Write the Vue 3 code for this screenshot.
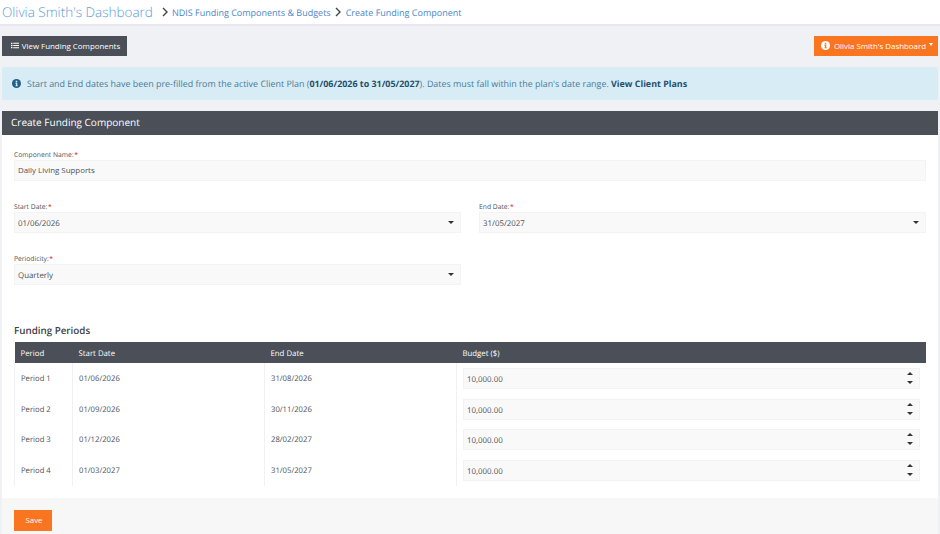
<template>
    <div class="page">
        <header class="topbar">
            <a class="crumb-title">Olivia Smith's Dashboard</a>
            <svg class="chevron first" viewBox="0 0 8 10"><path d="M2 1l4 4-4 4" /></svg>
            <a class="crumb">NDIS Funding Components &amp; Budgets</a>
            <svg class="chevron" viewBox="0 0 8 10"><path d="M2 1l4 4-4 4" /></svg>
            <a class="crumb">Create Funding Component</a>
        </header>

        <main class="content">
            <div class="actions">
                <button type="button" class="btn btn-dark">
                    <svg class="list-icon" viewBox="0 0 10 8">
                        <path d="M0 .5h1.8v1.6H0zM0 3.2h1.8v1.6H0zM0 5.9h1.8v1.6H0zM2.8.7H10v1.2H2.8zM2.8 3.4H10v1.2H2.8zM2.8 6.1H10v1.2H2.8z" />
                    </svg>
                    View Funding Components
                </button>
                <button type="button" class="btn btn-orange">
                    <svg class="info-icon" viewBox="0 0 16 16">
                        <circle cx="8" cy="8" r="8" fill="#fff" />
                        <path d="M6.6 3.2h2.8v2.4H6.6zM6 6.8h3.4v4.6h1V13H6v-1.6h1V8.4H6z" fill="#f97520" />
                    </svg>
                    Olivia Smith's Dashboard
                    <span class="caret"></span>
                </button>
            </div>

            <div class="alert">
                <svg class="alert-icon" viewBox="0 0 16 16">
                    <circle cx="8" cy="8" r="8" fill="#1f5f8b" />
                    <path d="M6.6 3.2h2.8v2.4H6.6zM6 6.8h3.4v4.6h1V13H6v-1.6h1V8.4H6z" fill="#d8ecf5" />
                </svg>
                <span>Start and End dates have been pre-filled from the active Client Plan (<b>01/06/2026 to 31/05/2027</b>). Dates must fall within the plan's date range. <b class="plans">View Client Plans</b></span>
            </div>

            <section class="card">
                <h2 class="card-title">Create Funding Component</h2>
                <div class="card-body">
                    <div class="field name-field">
                        <label>Component Name:<i>*</i></label>
                        <input class="control name-input" value="Daily Living Supports" />
                    </div>
                    <div class="form-grid">
                        <div class="field">
                            <label>Start Date:<i>*</i></label>
                            <div class="control select">01/06/2026<span class="arrow"></span></div>
                        </div>
                        <div class="field">
                            <label>End Date:<i>*</i></label>
                            <div class="control select">31/05/2027<span class="arrow"></span></div>
                        </div>
                        <div class="field">
                            <label>Periodicity:<i>*</i></label>
                            <div class="control select">Quarterly<span class="arrow"></span></div>
                        </div>
                    </div>

                    <h3 class="periods-title">Funding Periods</h3>
                    <table class="periods">
                        <thead>
                            <tr>
                                <th class="col-period">Period</th>
                                <th class="col-date">Start Date</th>
                                <th class="col-date">End Date</th>
                                <th>Budget ($)</th>
                            </tr>
                        </thead>
                        <tbody>
                            <tr v-for="row in periods" :key="row.name">
                                <td>{{ row.name }}</td>
                                <td>{{ row.start }}</td>
                                <td>{{ row.end }}</td>
                                <td class="budget-cell">
                                    <div class="control number">
                                        {{ row.budget }}
                                        <span class="spinner">
                                            <span class="up"></span>
                                            <span class="down"></span>
                                        </span>
                                    </div>
                                </td>
                            </tr>
                        </tbody>
                    </table>
                </div>
                <div class="card-footer">
                    <button type="button" class="btn btn-orange save">Save</button>
                </div>
            </section>
        </main>
    </div>
</template>

<script setup>
const periods = [
    { name: 'Period 1', start: '01/06/2026', end: '31/08/2026', budget: '10,000.00' },
    { name: 'Period 2', start: '01/09/2026', end: '30/11/2026', budget: '10,000.00' },
    { name: 'Period 3', start: '01/12/2026', end: '28/02/2027', budget: '10,000.00' },
    { name: 'Period 4', start: '01/03/2027', end: '31/05/2027', budget: '10,000.00' },
];
</script>

<style>
html, body {
    margin: 0;
    background: #f0f1f5;
    overflow: hidden;
}
</style>

<style scoped>
.page {
    width: 940px;
    height: 534px;
    overflow: hidden;
    font-family: "Open Sans", "Liberation Sans", sans-serif;
    font-size: 8px;
    color: #4f5158;
    text-rendering: geometricPrecision;
}

.topbar {
    box-sizing: border-box;
    height: 26px;
    display: flex;
    align-items: center;
    padding: 0 2px 0;
    background: #fff;
    border-bottom: 2px solid #e8e8ee;
}

.crumb-title {
    font-size: 13.5px;
    font-weight: 300;
    color: #5b9bd5;
}

.crumb {
    font-size: 9px;
    color: #4a86c8;
}

.chevron {
    width: 8px;
    height: 10px;
    margin: 0 4px 0 3px;
    fill: none;
    stroke: #444;
    stroke-width: 1.4;
}

.chevron.first {
    margin-left: 8px;
    margin-right: 3px;
}

.content {
    padding: 10px 2px 0;
}

.actions {
    display: flex;
    justify-content: space-between;
    height: 20px;
}

.btn {
    display: flex;
    align-items: center;
    justify-content: center;
    gap: 3px;
    height: 20px;
    border: 0;
    padding: 0 0 1px;
    font-family: inherit;
    font-size: 7.9px;
    color: #fff;
}

.btn-dark {
    width: 125px;
    background: #4b4f57;
    padding-left: 2px;
}

.btn-orange {
    width: 124px;
    background: #f97520;
    padding-left: 2px;
}

.list-icon {
    width: 8px;
    height: 7px;
    fill: #fff;
}

.info-icon {
    width: 9px;
    height: 9px;
    margin-right: 1px;
}

.caret {
    width: 0;
    height: 0;
    border-left: 2.5px solid transparent;
    border-right: 2.5px solid transparent;
    border-top: 3px solid #fff;
    margin-bottom: 2px;
}

.alert {
    box-sizing: border-box;
    height: 33px;
    margin-top: 11px;
    display: flex;
    align-items: center;
    gap: 6px;
    padding-left: 10px;
    background: #d8ecf5;
    border-radius: 2px;
    font-size: 8.92px;
    color: #4a7a98;
}

.alert-icon {
    width: 9px;
    height: 9px;
    flex: none;
}

.alert b {
    color: #1f4f6e;
    font-weight: 700;
}

.card {
    margin-top: 11px;
    background: #fff;
}

.card-title {
    box-sizing: border-box;
    height: 24px;
    margin: 0;
    padding-left: 9px;
    line-height: 23px;
    background: #4b4f57;
    color: #fff;
    font-size: 10px;
    font-weight: 400;
}

.card-body {
    height: 363px;
    box-sizing: border-box;
    padding: 14px 12px 0;
}

.field label {
    display: block;
    height: 11px;
    line-height: 11px;
    font-size: 6.75px;
    color: #4f5158;
}

.field label i {
    color: #e02020;
    font-style: normal;
    margin-left: 0.5px;
}

.control {
    box-sizing: border-box;
    display: block;
    width: 100%;
    height: 21px;
    line-height: 21px;
    padding: 0 3px;
    background: #f9f9f9;
    border: 1px solid #f3f3f3;
    outline: 0;
    font-family: inherit;
    font-size: 7.9px;
    color: #4f5158;
}

.name-input {
    padding-bottom: 1px;
}

.name-field {
    margin-bottom: 20px;
}

.form-grid {
    display: grid;
    grid-template-columns: 447px 447px;
    column-gap: 18px;
    row-gap: 20px;
}

.select {
    position: relative;
    line-height: 22px;
}

.arrow {
    position: absolute;
    top: 8px;
    right: 6px;
    width: 0;
    height: 0;
    border-left: 3px solid transparent;
    border-right: 3px solid transparent;
    border-top: 3px solid #333;
}

.periods-title {
    margin: 39px 0 5px;
    font-size: 9.8px;
    line-height: 13px;
    font-weight: 600;
    color: #3f4047;
}

.periods {
    width: 912px;
    table-layout: fixed;
    border-collapse: collapse;
}

.periods th {
    box-sizing: border-box;
    height: 21px;
    padding: 2px 6px 0;
    background: #4b4f57;
    color: #fff;
    font-size: 7.8px;
    font-weight: 400;
    text-align: left;
}

.col-period {
    width: 58px;
}

.col-date {
    width: 192px;
}

.periods td {
    height: 30.75px;
    padding: 1px 6px 0;
    border-left: 1px solid #f0f1f5;
    box-sizing: border-box;
    font-size: 7.7px;
}

.periods td.budget-cell {
    padding: 0 6px;
}

.number {
    position: relative;
    line-height: 22px;
}

.spinner {
    position: absolute;
    top: 3px;
    right: 6px;
    display: flex;
    flex-direction: column;
    gap: 6px;
}

.up {
    width: 0;
    height: 0;
    border-left: 3px solid transparent;
    border-right: 3px solid transparent;
    border-bottom: 3px solid #333;
}

.down {
    width: 0;
    height: 0;
    border-left: 3px solid transparent;
    border-right: 3px solid transparent;
    border-top: 3px solid #333;
}

.card-footer {
    height: 36px;
    box-sizing: border-box;
    padding: 12px 12px 0;
    background: #f7f7f7;
}

.save {
    width: 38px;
    height: 21px;
}
</style>
